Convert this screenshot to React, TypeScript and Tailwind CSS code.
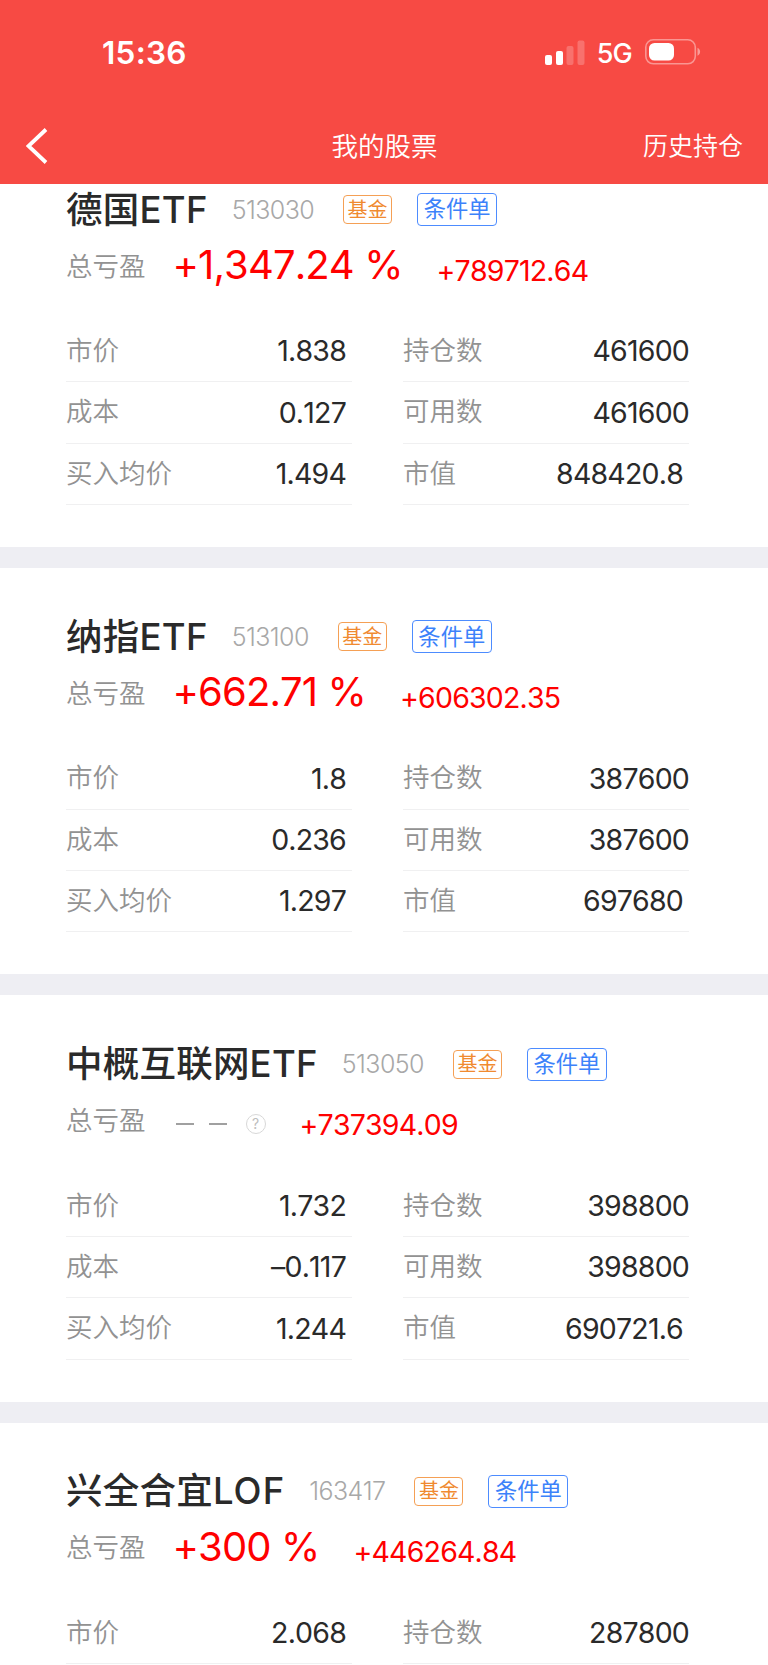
type Entry = { label: string; value: string; inset?: boolean };

type Holding = {
  name: string;
  kind: "ETF" | "LOF";
  code: string;
  rate: string | null;
  profit: string;
  left: Entry[];
  right: Entry[];
};

const holdings: Holding[] = [
  {
    name: "德国", kind: "ETF", code: "513030", rate: "+1,347.24 %", profit: "+789712.64",
    left: [{ label: "市价", value: "1.838" }, { label: "成本", value: "0.127" }, { label: "买入均价", value: "1.494" }],
    right: [{ label: "持仓数", value: "461600" }, { label: "可用数", value: "461600" }, { label: "市值", value: "848420.8", inset: true }],
  },
  {
    name: "纳指", kind: "ETF", code: "513100", rate: "+662.71 %", profit: "+606302.35",
    left: [{ label: "市价", value: "1.8" }, { label: "成本", value: "0.236" }, { label: "买入均价", value: "1.297" }],
    right: [{ label: "持仓数", value: "387600" }, { label: "可用数", value: "387600" }, { label: "市值", value: "697680", inset: true }],
  },
  {
    name: "中概互联网", kind: "ETF", code: "513050", rate: null, profit: "+737394.09",
    left: [{ label: "市价", value: "1.732" }, { label: "成本", value: "–0.117" }, { label: "买入均价", value: "1.244" }],
    right: [{ label: "持仓数", value: "398800" }, { label: "可用数", value: "398800" }, { label: "市值", value: "690721.6", inset: true }],
  },
  {
    name: "兴全合宜", kind: "LOF", code: "163417", rate: "+300 %", profit: "+446264.84",
    left: [{ label: "市价", value: "2.068" }],
    right: [{ label: "持仓数", value: "287800" }],
  },
];

function SignalIcon() {
  return (
    <svg width="40" height="26" viewBox="0 0 40 26" fill="#fff">
      <rect x="0" y="15" width="7" height="10" rx="2" />
      <rect x="11" y="11" width="7" height="14" rx="2" />
      <rect x="21.5" y="6" width="7" height="19" rx="2" opacity="0.22" />
      <rect x="32.5" y="0.5" width="7" height="24.5" rx="2" opacity="0.22" />
    </svg>
  );
}

function BatteryIcon() {
  return (
    <svg width="56" height="26" viewBox="0 0 56 26" fill="none">
      <rect x="0.8" y="0.8" width="49.5" height="24" rx="7.5" stroke="#fff" strokeOpacity="0.42" strokeWidth="1.6" />
      <rect x="4" y="4" width="25" height="17.6" rx="5.5" fill="#fff" />
      <path d="M52.5 8.8c1.7.8 2.6 2.3 2.6 4s-.9 3.2-2.6 4z" fill="#fff" fillOpacity="0.45" />
    </svg>
  );
}

function Field({ label, value, inset }: Entry) {
  return (
    <div className="flex h-[61.33px] items-center justify-between border-b border-[#f0f0f1]">
      <span className="pb-[2px] text-[26.5px] font-[350] leading-none text-[#929292]">{label}</span>
      <span className={`pt-px text-[28.5px] leading-none tracking-[-0.028em] text-[#2a2a2a] [font-kerning:none] ${inset ? "pr-[6px]" : ""}`}>{value}</span>
    </div>
  );
}

function HoldingCard({ item }: { item: Holding }) {
  return (
    <section className="h-[427.33px] shrink-0 border-b-[21px] border-[#eeeef3] bg-white pt-[50.33px]">
      <div className="flex h-9 items-center whitespace-nowrap pl-[66px]">
        <h2 className="pt-[1.5px] text-[36.5px] font-medium leading-none tracking-[0.006em] text-[#2a2a2a]">
          {item.name}
          <span className={item.kind === "LOF" ? "tracking-[0.03em]" : "tracking-[0.008em]"}>{item.kind}</span>
        </h2>
        <span className="ml-[24px] pt-[2px] text-[25px] font-light leading-none tracking-[-0.023em] text-[#a8a8a8] [font-kerning:none]">{item.code}</span>
        <span className="ml-[29px] mt-px flex h-[29px] w-[49px] items-center justify-center rounded-[4px] border border-[#f5a055] text-[20px] leading-none text-[#f08a30]">基金</span>
        <span className="ml-[25px] mt-px flex h-[33px] w-[80px] items-center justify-center rounded-[4px] border border-[#4d8cff] text-[22.3px] leading-none text-[#3c82fa]">条件单</span>
      </div>
      <div className="mt-[18px] flex h-11 items-start whitespace-nowrap pl-[66px]">
        <span className="pt-[7.5px] text-[26.5px] font-[350] leading-none text-[#929292]">总亏盈</span>
        {item.rate ? (
          <span className="ml-[27px] text-[40px] leading-none tracking-[-0.022em] text-[#ff0000] [font-kerning:none]">{item.rate}</span>
        ) : (
          <span className="ml-[30px] flex items-center gap-[15px] pt-[23.5px]">
            <i className="h-[2px] w-[18px] bg-[#a0a0a0]" />
            <i className="h-[2px] w-[18px] bg-[#a0a0a0]" />
            <span className="-my-[9px] ml-[4px] flex size-5 items-center justify-center rounded-full border border-[#d8d8d8] text-[14px] leading-none text-[#bdbdbd]">?</span>
          </span>
        )}
        <span className="ml-[34px] pt-[11.5px] text-[28.5px] leading-none tracking-[-0.028em] text-[#ff0000] [font-kerning:none]">{item.profit}</span>
      </div>
      <div className="mt-8 grid grid-cols-[286px_286px] gap-x-[51px] pl-[66px]">
        <div className="[&_span:last-child]:pr-[6px]">
          {item.left.map((entry) => (
            <Field key={entry.label} {...entry} />
          ))}
        </div>
        <div>
          {item.right.map((entry) => (
            <Field key={entry.label} {...entry} />
          ))}
        </div>
      </div>
    </section>
  );
}

export default function App() {
  return (
    <div className="flex h-[1665px] w-[768px] flex-col overflow-hidden bg-white font-[Inter,'Noto_Sans_CJK_SC',sans-serif]">
      <header className="z-10 flex h-[184px] shrink-0 flex-col bg-[#f74a44] text-white">
        <div className="flex h-[106px] items-center pl-[102px] pr-[67px]">
          <span className="text-[31.5px] font-semibold leading-none tracking-[0.008em]">15:36</span>
          <div className="ml-auto flex items-center">
            <SignalIcon />
            <span className="ml-[12px] mr-[13px] pt-px text-[27px] font-medium leading-none tracking-[-0.03em]">5G</span>
            <span className="-mt-[2px]"><BatteryIcon /></span>
          </div>
        </div>
        <nav className="grid h-[78px] grid-cols-3 items-center pl-[26px] pr-[25px]">
          <svg className="mt-px" width="22" height="36" viewBox="0 0 22 36" fill="none" stroke="#fff" strokeWidth="3.8">
            <path d="M20 1.5 2.5 18 20 34.5" />
          </svg>
          <h1 className="pt-[2px] text-center text-[26.5px] font-[350] leading-none">我的股票</h1>
          <span className="pt-[2px] text-right text-[25px] font-[350] leading-none">历史持仓</span>
        </nav>
      </header>
      <main className="-mt-[43.33px] flex flex-col">
        {holdings.map((item) => (
          <HoldingCard key={item.code} item={item} />
        ))}
      </main>
    </div>
  );
}
